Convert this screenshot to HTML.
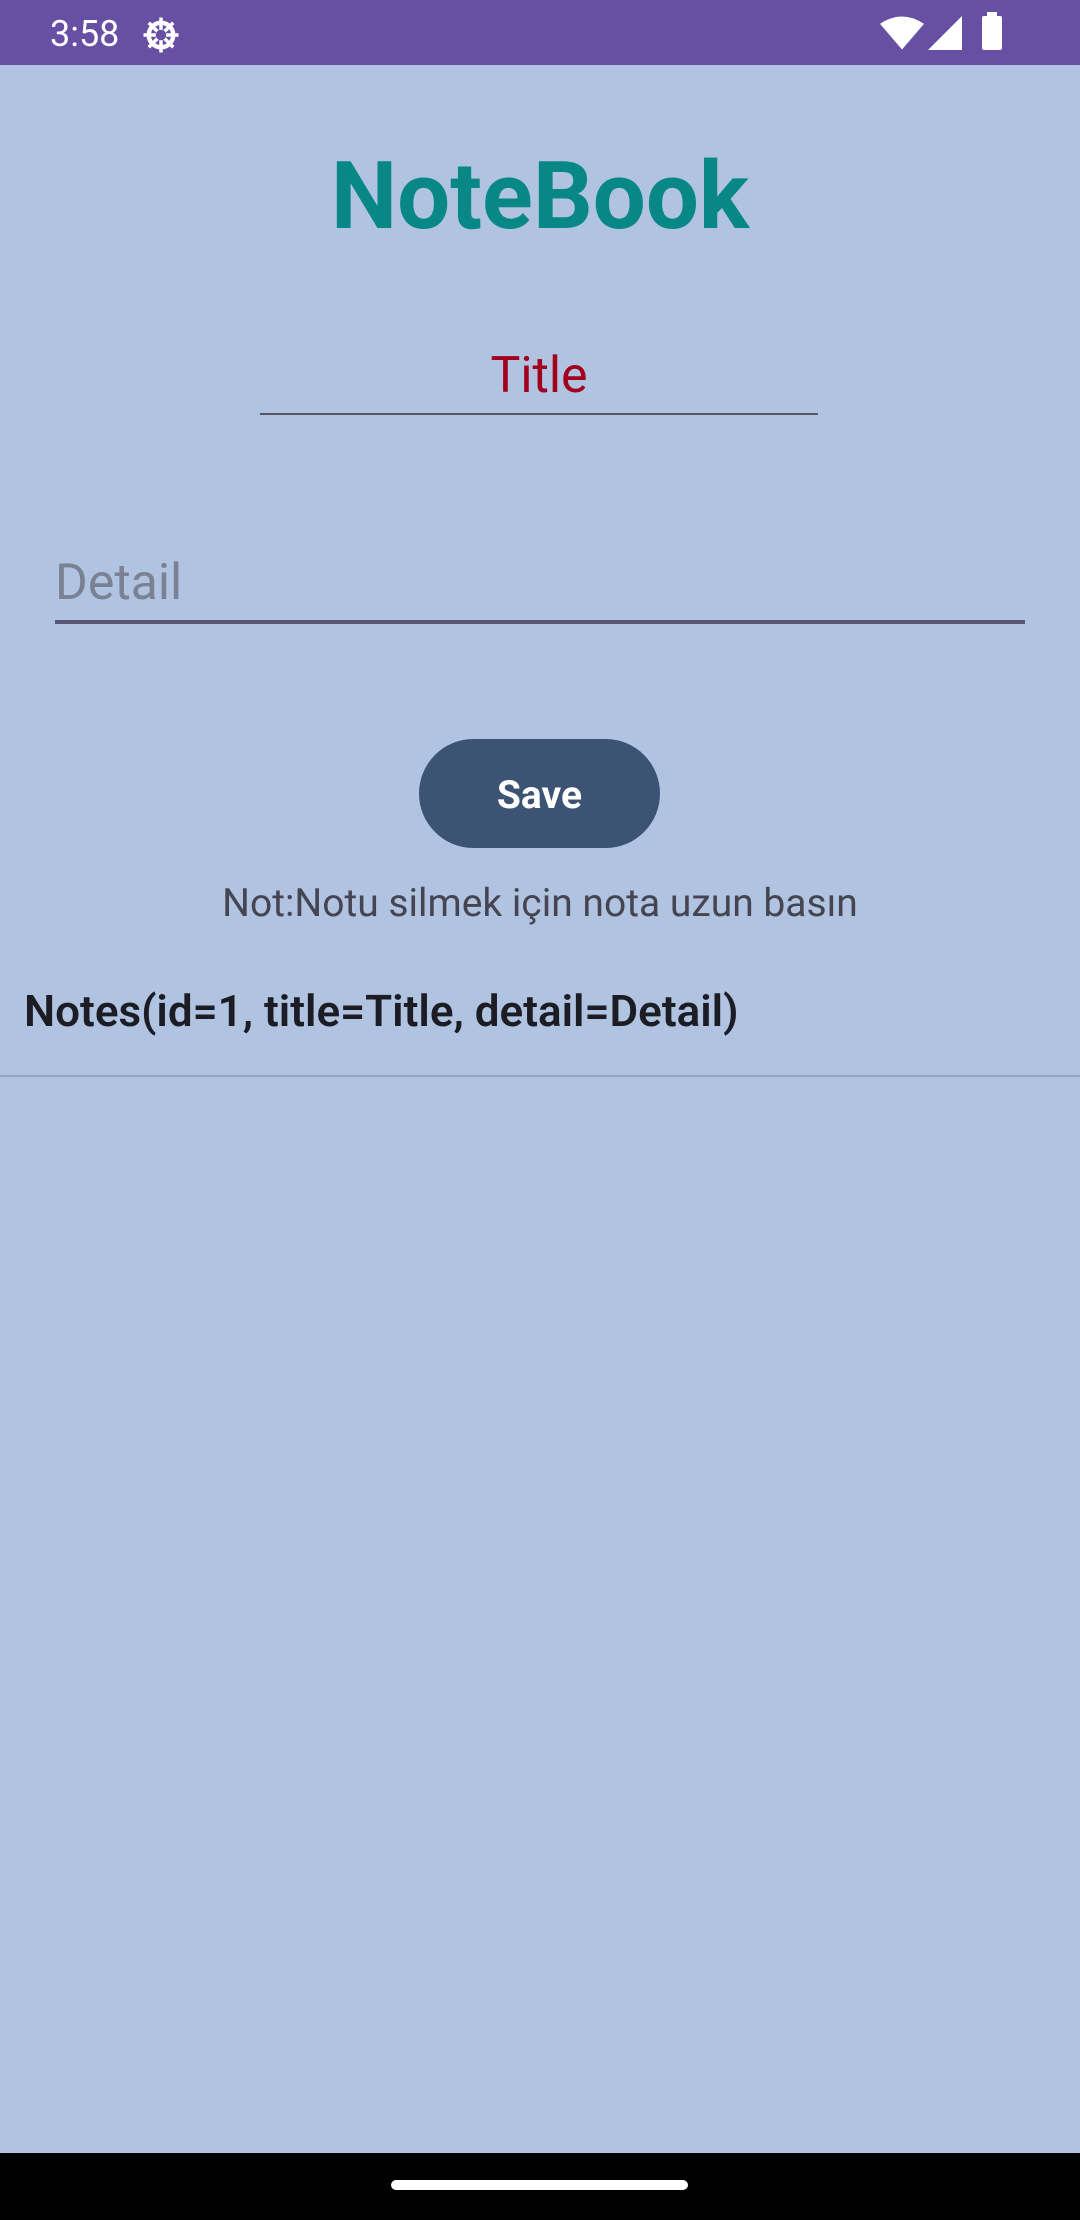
<!DOCTYPE html>
<html><head><meta charset="utf-8"><style>
body{margin:0;width:1080px;height:2220px;background:#b0c3e0;position:relative;overflow:hidden;font-family:"Roboto","Liberation Sans",sans-serif}
.abs{position:absolute}
</style></head><body>
<div class="abs" style="left:0;top:0;width:1080px;height:65px;background:#674fa3"></div>
<div class="abs" style="left:50px;top:12px;color:#fff;font-size:36px;line-height:44px">3:58</div>
<svg class="abs" style="left:140px;top:14px" width="42" height="42" viewBox="0 0 24 24"><circle cx="12" cy="12" r="7" fill="none" stroke="#fff" stroke-width="2.5"/><path d="M12 2v20M2 12h20M5 5l14 14M19 5L5 19" stroke="#fff" stroke-width="2"/><circle cx="12" cy="12" r="3" fill="#674fa3"/></svg>
<svg class="abs" style="left:880px;top:16px" width="44" height="34" viewBox="0 0 24 18"><path d="M0 4Q12-4 24 4L12 18Z" fill="#fff"/></svg>
<svg class="abs" style="left:928px;top:16px" width="34" height="34" viewBox="0 0 20 20"><path d="M20 0V20H0Z" fill="#fff"/></svg>
<div class="abs" style="left:982px;top:16px;width:20px;height:34px;background:#fff;border-radius:2px"></div>
<div class="abs" style="left:987px;top:12px;width:10px;height:5px;background:#fff"></div>
<div class="abs" style="left:0;width:1080px;top:141px;text-align:center;color:#088787;font-weight:bold;font-size:94px;line-height:110px">NoteBook</div>
<div class="abs" style="left:260px;width:558px;top:348px;text-align:center;color:#a3001d;font-size:50px;line-height:56px">Title</div>
<div class="abs" style="left:260px;width:558px;top:413px;height:2px;background:#55565e"></div>
<div class="abs" style="left:55px;top:555px;color:#7a8193;font-size:50px;line-height:56px">Detail</div>
<div class="abs" style="left:55px;width:970px;top:620px;height:4px;background:#5a5577"></div>
<div class="abs" style="left:419px;top:739px;width:241px;height:109px;border-radius:55px;background:#3d5373;color:#fff;font-weight:bold;font-size:39px;line-height:112px;text-align:center">Save</div>
<div class="abs" style="left:0;width:1080px;top:880px;text-align:center;color:#454552;font-size:39px;line-height:46px">Not:Notu silmek için nota uzun basın</div>
<div class="abs" style="left:24px;top:984px;color:#1c1c24;font-size:44px;font-weight:600;line-height:54px">Notes(id=1, title=Title, detail=Detail)</div>
<div class="abs" style="left:0;width:1080px;top:1075px;height:2px;background:#97a5bf"></div>
<div class="abs" style="left:0;width:1080px;top:2153px;height:67px;background:#000"></div>
<div class="abs" style="left:391px;width:297px;top:2180px;height:10px;border-radius:5px;background:#fff"></div>
</body></html>
